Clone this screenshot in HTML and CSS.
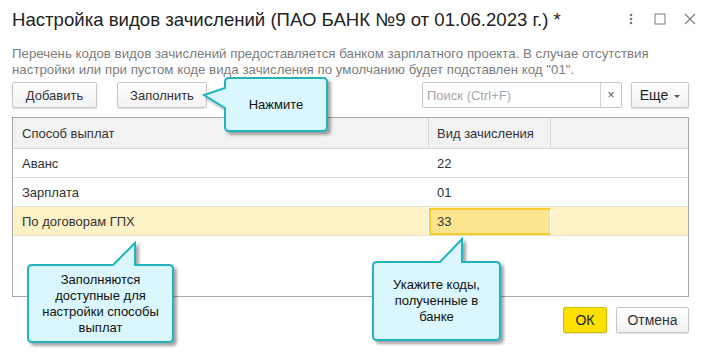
FILE: index.html
```html
<!DOCTYPE html>
<html lang="ru">
<head>
<meta charset="utf-8">
<link rel="stylesheet" href="styles.css">
</head>
<body>
<div class="window">
  <div class="titlebar">
    <div class="title">Настройка видов зачислений (ПАО БАНК №9 от 01.06.2023 г.) *</div>
    <div class="win-icons">
      <svg class="ic-dots" width="4" height="12" viewBox="0 0 4 12"><circle cx="2" cy="2" r="1.3"/><circle cx="2" cy="6" r="1.3"/><circle cx="2" cy="10" r="1.3"/></svg>
      <svg class="ic-max" width="12" height="12" viewBox="0 0 12 12"><rect x="1" y="1" width="10" height="10"/></svg>
      <svg class="ic-close" width="12" height="12" viewBox="0 0 12 12"><path d="M1 1 L11 11 M11 1 L1 11"/></svg>
    </div>
  </div>
  <div class="desc">Перечень кодов видов зачислений предоставляется банком зарплатного проекта. В случае отсутствия настройки или при пустом коде вида зачисления по умолчанию будет подставлен код "01".</div>
  <div class="toolbar">
    <button class="btn btn-add">Добавить</button>
    <button class="btn btn-fill">Заполнить</button>
    <div class="search">
      <span class="search-ph">Поиск (Ctrl+F)</span>
      <span class="search-clear">×</span>
    </div>
    <button class="btn btn-more">Еще <span class="caret"></span></button>
  </div>
  <div class="table">
    <div class="row head">
      <div class="cell c1">Способ выплат</div>
      <div class="cell c2">Вид зачисления</div>
      <div class="cell c3"></div>
    </div>
    <div class="row">
      <div class="cell c1">Аванс</div>
      <div class="cell c2">22</div>
      <div class="cell c3"></div>
    </div>
    <div class="row">
      <div class="cell c1">Зарплата</div>
      <div class="cell c2">01</div>
      <div class="cell c3"></div>
    </div>
    <div class="row sel">
      <div class="cell c1">По договорам ГПХ</div>
      <div class="cell c2 active">33</div>
      <div class="cell c3"></div>
    </div>
  </div>
  <div class="footer">
    <button class="btn btn-ok">ОК</button>
    <button class="btn btn-cancel">Отмена</button>
  </div>
</div>

<div class="callout callout-1">
  <svg class="callout-shape" width="140" height="70" viewBox="0 0 140 70">
    <defs><filter id="sh1" x="-20%" y="-20%" width="140%" height="140%"><feDropShadow dx="3" dy="3" stdDeviation="1.5" flood-color="#000" flood-opacity="0.35"/></filter></defs>
    <path filter="url(#sh1)" d="M31,6 H125 Q129,6 129,10 V55 Q129,59 125,59 H31 Q27,59 27,55 V36 L6,23 L27,16 V10 Q27,6 31,6 Z"/>
  </svg>
  <div class="callout-text">Нажмите</div>
</div>

<div class="callout callout-2">
  <svg class="callout-shape" width="160" height="115" viewBox="0 0 160 115">
    <defs><filter id="sh2" x="-20%" y="-20%" width="140%" height="140%"><feDropShadow dx="3" dy="3" stdDeviation="1.5" flood-color="#000" flood-opacity="0.35"/></filter></defs>
    <path filter="url(#sh2)" d="M10,28 H91 L113,6 V28 H147 Q151,28 151,32 V101 Q151,105 147,105 H10 Q6,105 6,101 V32 Q6,28 10,28 Z"/>
  </svg>
  <div class="callout-text">Заполняются<br>доступные для<br>настройки способы<br>выплат</div>
</div>

<div class="callout callout-3">
  <svg class="callout-shape" width="145" height="115" viewBox="0 0 145 115">
    <defs><filter id="sh3" x="-20%" y="-20%" width="140%" height="140%"><feDropShadow dx="3" dy="3" stdDeviation="1.5" flood-color="#000" flood-opacity="0.35"/></filter></defs>
    <path filter="url(#sh3)" d="M10,29 H73 L95,6 V29 H129 Q133,29 133,33 V103 Q133,107 129,107 H10 Q6,107 6,103 V33 Q6,29 10,29 Z"/>
  </svg>
  <div class="callout-text">Укажите коды,<br>полученные в<br>банке</div>
</div>
</body>
</html>
```

FILE: styles.css
```css
* { box-sizing: border-box; }
html, body {
  margin: 0;
  padding: 0;
  background: #fff;
}
body {
  width: 710px;
  height: 352px;
  overflow: hidden;
  position: relative;
  font-family: "Liberation Sans", Arial, sans-serif;
  color: #333;
  font-size: 13px;
}
.window {
  padding: 0 21px 0 12px;
}
.titlebar {
  display: flex;
  align-items: flex-start;
  height: 46px;
  padding-top: 8px;
}
.title {
  font-size: 18.6px;
  line-height: 23px;
  color: #222;
  white-space: nowrap;
}
.win-icons {
  margin-left: auto;
  display: flex;
  align-items: center;
  height: 22px;
  margin-right: -7px;
}
.ic-dots { fill: #7a7a7a; margin-right: 21px; }
.ic-max { fill: none; stroke: #7a7a7a; stroke-width: 1; margin-right: 18px; }
.ic-close { fill: none; stroke: #7a7a7a; stroke-width: 1.1; }

.desc {
  font-size: 13.3px;
  line-height: 16px;
  color: #7d7d7d;
  height: 36px;
}
.toolbar {
  display: flex;
  align-items: center;
  height: 26px;
}
.btn {
  height: 26px;
  font-family: "Liberation Sans", Arial, sans-serif;
  font-size: 13px;
  color: #333;
  background: linear-gradient(#ffffff, #f2f2f2);
  border: 1px solid #c6c6c6;
  border-radius: 2px;
  box-shadow: 0 1px 1px rgba(0,0,0,0.12);
  padding: 0;
  margin: 0;
}
.btn-add { width: 85px; }
.btn-fill { width: 90px; margin-left: 20px; }
.search {
  margin-left: auto;
  width: 200px;
  height: 26px;
  border: 1px solid #c6c6c6;
  border-radius: 2px;
  display: flex;
  align-items: center;
  background: #fff;
}
.search-ph {
  flex: 1;
  color: #a8a8a8;
  padding-left: 4px;
  font-size: 13px;
}
.search-clear {
  width: 21px;
  height: 24px;
  border-left: 1px solid #d6d6d6;
  display: flex;
  align-items: center;
  justify-content: center;
  color: #555;
  font-size: 12px;
}
.btn-more {
  width: 58px;
  margin-left: 9px;
  font-size: 14px;
  color: #222;
  display: flex;
  align-items: center;
  justify-content: center;
}
.caret {
  display: inline-block;
  width: 0;
  height: 0;
  border-left: 3px solid transparent;
  border-right: 3px solid transparent;
  border-top: 3px solid #555;
  margin-left: 6px;
  margin-top: 2px;
}
.table {
  margin-top: 9px;
  height: 180px;
  border: 1px solid #a9a9a9;
}
.row {
  display: grid;
  grid-template-columns: 416px 122px 1fr;
  height: 29px;
  border-bottom: 1px solid #e2e2e2;
}
.row.head {
  height: 31px;
  background: #f2f2f2;
  border-bottom: 1px solid #d6d6d6;
}
.row.head .cell { border-right: 1px solid #d9d9d9; }
.row.head .c3 { border-right: none; }
.cell {
  display: flex;
  align-items: center;
  padding-left: 9px;
  font-size: 13px;
  color: #333;
  white-space: nowrap;
}
.c2 { padding-left: 8px; }
.row.head .c2 { padding-left: 8px; }
.row.sel {
  background: #fdf2c6;
  border-bottom: 1px solid #e8e3d0;
}
.row.sel .c1 { border-right: 1px solid #fff; }
.row.sel .c2 { border-right: 1px solid #fff; }
.cell.active {
  background: #fde590;
  border: 2px solid #f8cb2c;
  margin-top: 1px;
  padding-left: 6px;
}
.footer {
  margin-top: 10px;
  display: flex;
  justify-content: flex-end;
}
.btn-ok {
  width: 44px;
  background: #fbe000;
  border-color: #d4ba00;
  font-size: 14px;
  color: #222;
}
.btn-cancel {
  width: 73px;
  margin-left: 9px;
  font-size: 14px;
}

.callout {
  position: absolute;
  display: flex;
  align-items: center;
  justify-content: center;
}
.callout-shape {
  position: absolute;
  left: -6px;
  top: -6px;
  fill: #d9f7fc;
  stroke: #22b3be;
  stroke-width: 2;
  overflow: visible;
}
.callout-text {
  position: relative;
  text-align: center;
  font-size: 13px;
  line-height: 16px;
  color: #111;
}
.callout-1 { left: 225px; top: 78px; width: 102px; height: 53px; }
.callout-1 .callout-shape { left: -27px; top: -6px; }
.callout-2 { left: 28px; top: 265px; width: 145px; height: 77px; }
.callout-2 .callout-shape { left: -6px; top: -28px; }
.callout-3 { left: 373px; top: 262px; width: 127px; height: 78px; }
.callout-3 .callout-shape { left: -6px; top: -29px; }
```
